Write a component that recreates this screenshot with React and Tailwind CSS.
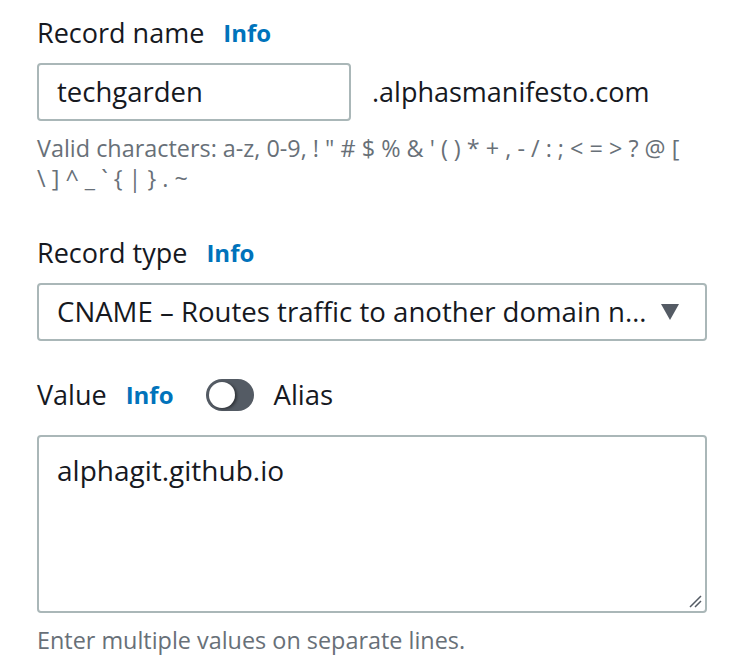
import React from 'react';

const Info = () => (
  <span className="font-bold text-[#0073bb] text-[24px] leading-[36px]">Info</span>
);

const Label = ({ children }) => (
  <div className="flex items-center h-[36px]">
    <span className="text-[27px] leading-[36px] text-[#16191f]">{children}</span>
    <span className="ml-[19px]">
      <Info />
    </span>
  </div>
);

export default function App() {
  return (
    <div
      className="w-[744px] h-[662px] bg-white pl-[37px] pt-[15px] overflow-hidden"
      style={{ fontFamily: '"Open Sans", "Noto Sans", sans-serif' }}
    >
      {/* Record name */}
      <Label>Record name</Label>
      <div className="mt-3 flex items-center">
        <div className="w-[314px] h-[58px] border-2 border-[#aab7b8] rounded-[4px] flex items-center px-[18px]">
          <span className="text-[27.5px] text-[#16191f]">techgarden</span>
        </div>
        <span className="ml-[21px] text-[27px] text-[#16191f]">.alphasmanifesto.com</span>
      </div>
      <p className="mt-3 w-[680px] text-[23.4px] leading-[30px] text-[#687078]">
        Valid characters: a-z, 0-9, ! " # $ % &amp; ' ( ) * + , - / : ; &lt; = &gt; ? @ [
        <br />
        \ ] ^ _ ` {'{'} | {'}'} . ~
      </p>

      {/* Record type */}
      <div className="mt-[42px]">
        <Label>Record type</Label>
      </div>
      <div className="mt-3 w-[670px] h-[58px] border-2 border-[#aab7b8] rounded-[4px] flex items-center justify-between pl-[18px] pr-[26px]">
        <span className="text-[27.6px] text-[#16191f] whitespace-nowrap">
          CNAME – Routes traffic to another domain n…
        </span>
        <svg width="18" height="16" viewBox="0 0 18 16">
          <path d="M0 0 H18 L9 16 Z" fill="#545b64" />
        </svg>
      </div>

      {/* Value */}
      <div className="mt-[36px] flex items-center h-[36px]">
        <span className="text-[27px] leading-[36px] text-[#16191f]">Value</span>
        <span className="ml-[19px]">
          <Info />
        </span>
        <div className="ml-[32px] w-[48px] h-[32px] rounded-full bg-[#545b64] flex items-center px-[3px]">
          <div className="w-[26px] h-[26px] rounded-full bg-white shadow-[2px_1px_3px_rgba(0,0,0,0.45)]" />
        </div>
        <span className="ml-[20px] text-[27.5px] leading-[36px] text-[#16191f]">Alias</span>
      </div>
      <div className="mt-[22px] relative w-[670px] h-[178px] border-2 border-[#aab7b8] rounded-[4px] px-[18px] pt-[12px]">
        <span className="text-[28px] text-[#16191f]">alphagit.github.io</span>
        <svg className="absolute right-[3px] bottom-[3px]" width="14" height="14" viewBox="0 0 14 14">
          <path d="M13 2 L2 13 M13 7 L7 13" stroke="#545b64" strokeWidth="1.5" />
        </svg>
      </div>
      <p className="mt-3 text-[23.4px] leading-[30px] text-[#687078]">
        Enter multiple values on separate lines.
      </p>
    </div>
  );
}
